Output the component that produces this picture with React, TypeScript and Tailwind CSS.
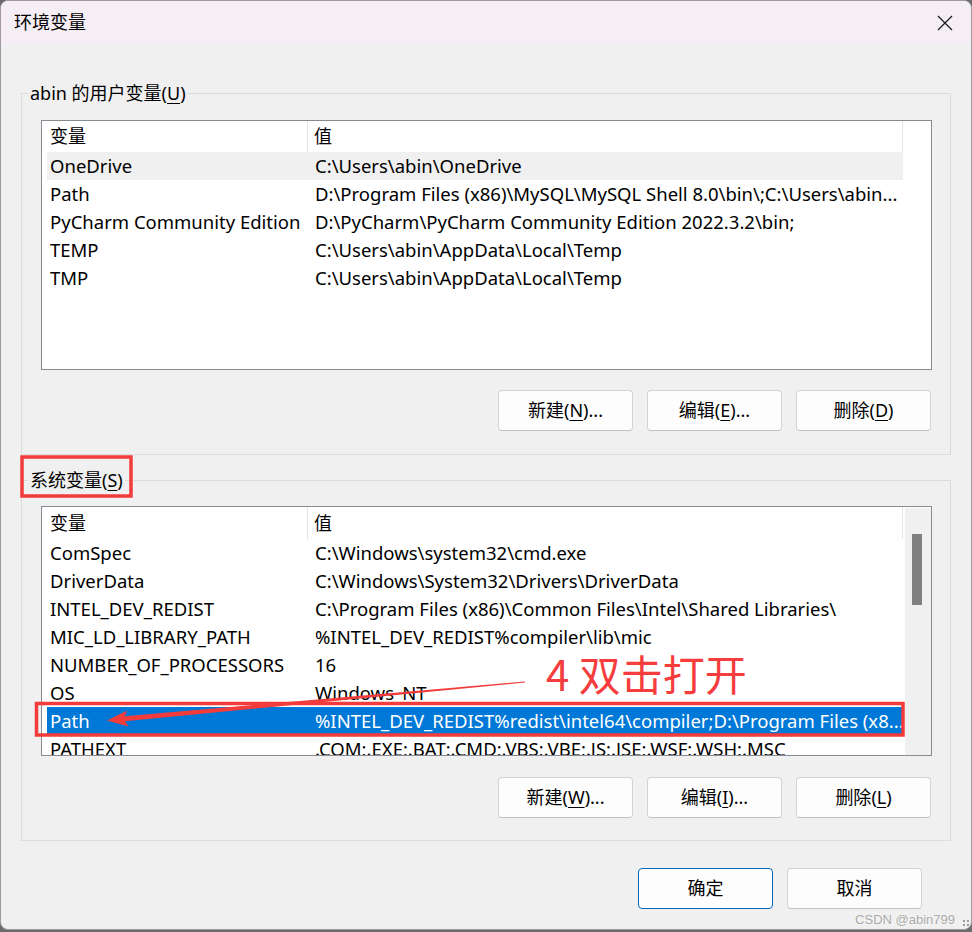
import type { ReactNode } from "react";

type EnvVar = { name: string; value: string };

const userVars: EnvVar[] = [
  { name: "OneDrive", value: "C:\\Users\\abin\\OneDrive" },
  { name: "Path", value: "D:\\Program Files (x86)\\MySQL\\MySQL Shell 8.0\\bin\\;C:\\Users\\abin..." },
  { name: "PyCharm Community Edition", value: "D:\\PyCharm\\PyCharm Community Edition 2022.3.2\\bin;" },
  { name: "TEMP", value: "C:\\Users\\abin\\AppData\\Local\\Temp" },
  { name: "TMP", value: "C:\\Users\\abin\\AppData\\Local\\Temp" },
];

const systemVars: EnvVar[] = [
  { name: "ComSpec", value: "C:\\Windows\\system32\\cmd.exe" },
  { name: "DriverData", value: "C:\\Windows\\System32\\Drivers\\DriverData" },
  { name: "INTEL_DEV_REDIST", value: "C:\\Program Files (x86)\\Common Files\\Intel\\Shared Libraries\\" },
  { name: "MIC_LD_LIBRARY_PATH", value: "%INTEL_DEV_REDIST%compiler\\lib\\mic" },
  { name: "NUMBER_OF_PROCESSORS", value: "16" },
  { name: "OS", value: "Windows_NT" },
  { name: "Path", value: "%INTEL_DEV_REDIST%redist\\intel64\\compiler;D:\\Program Files (x8..." },
  { name: "PATHEXT", value: ".COM;.EXE;.BAT;.CMD;.VBS;.VBE;.JS;.JSE;.WSF;.WSH;.MSC" },
];

const FONT = "font-['Noto_Sans','Noto_Sans_CJK_SC',sans-serif]";

function Mnemonic({ label, keyChar, suffix = "" }: { label: string; keyChar: string; suffix?: string }) {
  return (
    <>
      {label}(<span className="underline underline-offset-[3px]">{keyChar}</span>){suffix}
    </>
  );
}

function DialogButton({ children, primary = false }: { children: ReactNode; primary?: boolean }) {
  return (
    <button
      type="button"
      className={`flex h-[41px] w-[135px] items-center justify-center rounded-[4px] bg-[#fdfdfd] text-[18px] text-black ${
        primary ? "border border-[#0067c0]" : "border border-[#d3d3d3] border-b-[#c2c2c2]"
      }`}
    >
      {children}
    </button>
  );
}

function VarList({
  rows,
  hoverIndex,
  selectedIndex,
  scrollbar = false,
  headerClass = "h-[32px]",
}: {
  rows: EnvVar[];
  hoverIndex?: number;
  selectedIndex?: number;
  scrollbar?: boolean;
  headerClass?: string;
}) {
  return (
    <div className="flex h-[250px] w-[891px] overflow-hidden border border-[#868a92] bg-white text-[18.5px]">
      <div className="w-[861px] shrink-0">
        <div className={`flex items-center text-[18px] ${headerClass}`}>
          <div className="flex h-full w-[266px] items-center border-r border-[#e5e5e5] pl-[8px]">变量</div>
          <div className="flex h-full flex-1 items-center border-r border-[#e5e5e5] pl-[6px]">值</div>
        </div>
        {rows.map((row, i) => {
          const selected = i === selectedIndex;
          const hovered = i === hoverIndex;
          return (
            <div
              key={row.name}
              className={`ml-[5px] flex h-[28px] w-[856px] items-center whitespace-nowrap ${
                selected ? "bg-[#0078d7] text-white" : hovered ? "bg-[#f0f0f0]" : ""
              }`}
            >
              <div className="w-[261px] shrink-0 overflow-hidden pl-[3px]">{row.name}</div>
              <div className="min-w-0 flex-1 overflow-hidden pl-[7px]">{row.value}</div>
            </div>
          );
        })}
      </div>
      <div className="w-[2px] shrink-0" />
      {scrollbar ? (
        <div className="mt-[1px] w-[26px] shrink-0 bg-[#f0f0f0]">
          <div className="ml-[7px] mt-[26px] h-[71px] w-[10px] bg-[#808080]" />
        </div>
      ) : null}
    </div>
  );
}

function GroupBox({
  title,
  children,
  className = "",
}: {
  title: ReactNode;
  children: ReactNode;
  className?: string;
}) {
  return (
    <div className={`relative ml-[20px] w-[930px] border border-[#dcdcdc] pl-[19px] ${className}`}>
      <span className="absolute left-[6px] top-[-14px] bg-[#f0f0f0] px-[2px] leading-[26px]">{title}</span>
      {children}
    </div>
  );
}

export default function App() {
  return (
    <div className={`relative h-[932px] w-[972px] overflow-hidden bg-[#6b6b6b] text-[18px] text-black ${FONT}`}>
      <div className="h-[930px] w-[972px] overflow-hidden rounded-[8px] border border-[#9c9c9c] bg-[#f0f0f0]">
        {/* title bar */}
        <div className="flex h-[43px] items-center justify-between bg-[#f6eef5] pl-[13px] pr-[18px]">
          <span className="text-[18px]">环境变量</span>
          <svg width="16" height="16" viewBox="0 0 16 16" className="mt-[1px]">
            <path d="M1 1 L15 15 M15 1 L1 15" stroke="#1b1b1b" strokeWidth="1.3" />
          </svg>
        </div>

        <GroupBox title={<>abin 的用户变量(<span className="underline underline-offset-[3px]">U</span>)</>} className="mt-[49px] pb-[23px] pt-[26px]">
          <VarList rows={userVars} hoverIndex={0} headerClass="h-[31px]" />
          <div className="mt-[20px] flex justify-end gap-[14px] pr-[19px]">
            <DialogButton><Mnemonic label="新建" keyChar="N" suffix="..." /></DialogButton>
            <DialogButton><Mnemonic label="编辑" keyChar="E" suffix="..." /></DialogButton>
            <DialogButton><Mnemonic label="删除" keyChar="D" /></DialogButton>
          </div>
        </GroupBox>

        <GroupBox title={<>系统变量(<span className="underline underline-offset-[3px]">S</span>)</>} className="mt-[25px] pb-[22px] pt-[25px]">
          <VarList rows={systemVars} selectedIndex={6} scrollbar />
          <div className="mt-[21px] flex justify-end gap-[14px] pr-[19px]">
            <DialogButton><Mnemonic label="新建" keyChar="W" suffix="..." /></DialogButton>
            <DialogButton><Mnemonic label="编辑" keyChar="I" suffix="..." /></DialogButton>
            <DialogButton><Mnemonic label="删除" keyChar="L" /></DialogButton>
          </div>
        </GroupBox>

        <div className="mt-[27px] flex justify-end gap-[14px] pr-[49px]">
          <DialogButton primary>确定</DialogButton>
          <DialogButton>取消</DialogButton>
        </div>
      </div>

      {/* red markup drawn on top of the dialog */}
      <svg className="pointer-events-none absolute left-0 top-0" width="972" height="932" viewBox="0 0 972 932">
        <rect x="22" y="457" width="109" height="39" fill="none" stroke="#f23b3b" strokeWidth="3.5" />
        <rect x="36.5" y="703.5" width="866.5" height="31.5" fill="none" stroke="#f23b3b" strokeWidth="3.5" />
        <polygon points="525,681.5 525,682.5 122.2,721.5 121.8,716.5" fill="#f23b3b" />
        <polygon points="107,720.5 127.2,710.6 123.5,719 128.6,726.6" fill="#f23b3b" />
      </svg>
      <span className="absolute left-[546px] top-[650px] text-[42px] leading-[46px] text-[#f53d3d] font-['Noto_Sans_CJK_SC',sans-serif]">
        4 双击打开
      </span>

      <span className="absolute bottom-[6px] right-[17px] text-[13px] leading-none text-[#a9a9a9] [text-shadow:0_0_2px_#fff] font-['Liberation_Sans',sans-serif]">
        CSDN @abin799
      </span>
      <div className="absolute bottom-[6px] right-[3px] grid grid-cols-2 gap-[2px]">
        <span className="h-[2px] w-[2px] bg-[#9a9a9a]" />
        <span className="h-[2px] w-[2px] bg-[#9a9a9a]" />
        <span className="h-[2px] w-[2px] bg-[#9a9a9a]" />
        <span className="h-[2px] w-[2px] bg-[#9a9a9a]" />
      </div>
    </div>
  );
}
